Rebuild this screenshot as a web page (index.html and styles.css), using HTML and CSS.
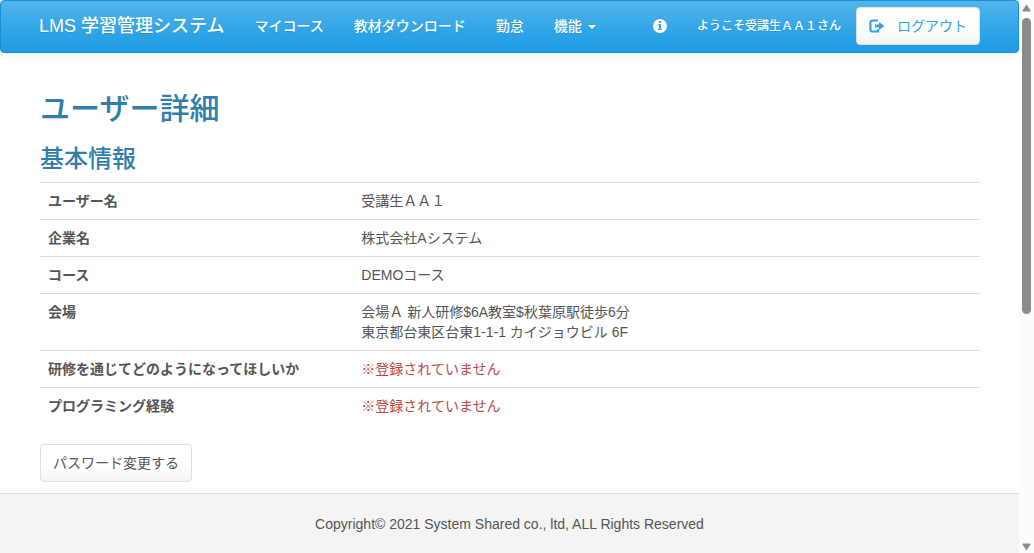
FILE: index.html
```html
<!DOCTYPE html>
<html lang="ja">
<head>
<meta charset="utf-8">
<meta name="viewport" content="width=device-width, initial-scale=1">
<title>ユーザー詳細 | LMS 学習管理システム</title>
<link rel="stylesheet" href="styles.css">
</head>
<body>
<div class="page">
  <header class="navbar">
    <a class="brand" href="#">LMS 学習管理システム</a>
    <nav class="menu">
      <a class="menu-link" href="#">マイコース</a>
      <a class="menu-link" href="#">教材ダウンロード</a>
      <a class="menu-link" href="#">勤怠</a>
      <button class="menu-link" type="button" aria-haspopup="true">機能<span class="caret"></span></button>
    </nav>
    <div class="account">
      <a class="info" href="#" aria-label="お知らせ">
        <svg class="icon-info" viewBox="0 0 14 14" aria-hidden="true"><path fill="#fff" fill-rule="evenodd" d="M7 0a7 7 0 1 1 0 14A7 7 0 0 1 7 0zM6 2v2h2V2zM5 5v1h1v4H5v1h4v-1H8V5z"/></svg>
      </a>
      <a class="welcome" href="#">ようこそ受講生ＡＡ１さん</a>
      <button class="btn btn-logout" type="button">
        <svg class="icon-logout" viewBox="0 0 16 14" aria-hidden="true"><path fill="none" stroke="currentColor" stroke-width="2.2" d="M9 1.500H3.600A2.200 2.200 0 0 0 1.400 3.700v6.600A2.200 2.200 0 0 0 3.600 12.500H9V10"/><path fill="currentColor" d="M6 5.600h4V3l5.500 4-5.500 4V8.400H6z"/></svg>
        ログアウト
      </button>
    </div>
  </header>

  <main class="content">
    <h1 class="title">ユーザー詳細</h1>
    <h2 class="subtitle">基本情報</h2>
    <table class="details">
      <tbody>
        <tr><th scope="row">ユーザー名</th><td>受講生ＡＡ１</td></tr>
        <tr><th scope="row">企業名</th><td>株式会社Aシステム</td></tr>
        <tr><th scope="row">コース</th><td>DEMOコース</td></tr>
        <tr><th scope="row">会場</th><td>会場Ａ 新人研修$6A教室$秋葉原駅徒歩6分<br>東京都台東区台東1-1-1 カイジョウビル 6F</td></tr>
        <tr><th scope="row">研修を通じてどのようになってほしいか</th><td class="missing">※登録されていません</td></tr>
        <tr><th scope="row">プログラミング経験</th><td class="missing">※登録されていません</td></tr>
      </tbody>
    </table>
    <button class="btn" type="button">パスワード変更する</button>
  </main>

  <footer class="footer">Copyright© 2021 System Shared co., ltd, ALL Rights Reserved</footer>
</div>
<div class="scrollbar" aria-hidden="true">
  <svg class="arrow" viewBox="0 0 9 8"><path d="M4.500 0.500 8.500 6.500Q8.700 7.500 7.700 7.500H1.300Q.3 7.500.5 6.500z"/></svg>
  <div class="track"><div class="thumb"></div></div>
  <svg class="arrow" viewBox="0 0 9 8"><path d="M4.500 7.500 8.500 1.500Q8.700.5 7.700.5H1.300Q.3.5.5 1.500z"/></svg>
</div>
</body>
</html>
```

FILE: styles.css
```css
* {
  box-sizing: border-box;
}

body {
  margin: 0;
  display: flex;
  min-height: 100vh;
  background: #fff;
  color: #555;
  font-family: "Liberation Sans", "Noto Sans CJK JP", sans-serif;
  font-size: 14px;
  line-height: 20px;
}

a {
  color: inherit;
  text-decoration: none;
}

button {
  font: inherit;
  color: inherit;
  cursor: pointer;
}

.page {
  flex: 1;
  min-width: 0;
  display: flex;
  flex-direction: column;
}

.navbar {
  display: flex;
  align-items: center;
  min-height: 53px;
  padding: 0 38px 2px;
  border: 1px solid #1990d5;
  border-radius: 4px;
  background: linear-gradient(#54b4eb, #2fa4e7 60%, #1d9ce5);
  box-shadow: 0 1px 10px rgba(0, 0, 0, 0.1);
  color: #fff;
  font-weight: 500;
  text-shadow: 0 1px 0 rgba(0, 0, 0, 0.1);
  white-space: nowrap;
}

.brand {
  padding-right: 15px;
  font-size: 18px;
}

.menu {
  display: flex;
}

.menu-link {
  display: block;
  padding: 14px 15px;
  border: 0;
  background: none;
  text-shadow: inherit;
}

.caret {
  display: inline-block;
  margin-left: 6px;
  vertical-align: middle;
  border-top: 4px solid;
  border-left: 4px solid transparent;
  border-right: 4px solid transparent;
}

.account {
  display: flex;
  align-items: center;
  margin-left: auto;
}

.info {
  display: flex;
  margin-right: 30px;
}

.icon-info {
  width: 14px;
  height: 14px;
}

.welcome {
  margin-right: 15px;
  font-size: 12px;
}

.btn {
  padding: 8px 12px;
  border: 1px solid #e0e0e0;
  border-radius: 4px;
  background: linear-gradient(#fff, #fff 60%, #f3f3f3);
}

.btn-logout {
  display: flex;
  align-items: center;
  gap: 12px;
  color: #2fa4e7;
  font-weight: 400;
}

.icon-logout {
  width: 16px;
  height: 14px;
}

.content {
  flex: 1;
  padding: 39px 39px 11px 40px;
}

.title,
.subtitle {
  margin: 0;
  color: #317eac;
  font-weight: 500;
}

.title {
  margin-bottom: 18px;
  font-size: 30px;
  line-height: 34px;
}

.subtitle {
  margin-bottom: 8px;
  font-size: 24px;
  line-height: 30px;
}

.details {
  width: 100%;
  margin-bottom: 20px;
  border-collapse: collapse;
}

.details th,
.details td {
  padding: 8px;
  border-top: 1px solid #ddd;
  text-align: left;
  vertical-align: top;
}

.details th {
  width: 33.33%;
}

.details .missing {
  color: #b94a48;
}

.footer {
  padding: 20px;
  border-top: 1px solid #ddd;
  background: #f4f4f4;
  text-align: center;
}

.scrollbar {
  display: flex;
  flex-direction: column;
  align-items: center;
  width: 15px;
  padding: 4px 0 3px;
  background: #fcfcfc;
}

.arrow {
  width: 9px;
  height: 8px;
  fill: #8b8b8b;
}

.track {
  flex: 1;
  width: 9px;
  margin: 6px 0;
}

.thumb {
  height: 57%;
  border-radius: 5px;
  background: #8b8b8b;
}
```
